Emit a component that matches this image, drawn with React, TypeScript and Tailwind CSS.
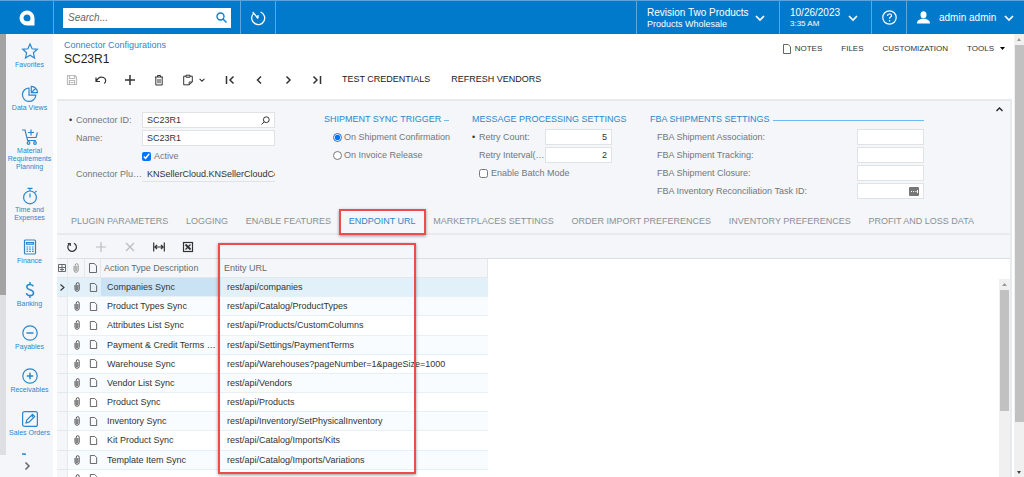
import type { ReactNode } from "react";

function Icon({ className = "size-3", box = 24, width = 2, children }: { className?: string; box?: number; width?: number; children: ReactNode }) {
  return (
    <svg
      viewBox={`0 0 ${box} ${box}`}
      className={`block shrink-0 ${className}`}
      fill="none"
      stroke="currentColor"
      strokeWidth={width}
      aria-hidden="true"
    >
      {children}
    </svg>
  );
}

const ChevronDown = ({ className = "size-[10px]" }: { className?: string }) => (
  <Icon className={className} box={10} width={1.7}>
    <path d="M1 3l4 4 4-4" />
  </Icon>
);

const PageIcon = ({ className = "size-[10px]" }: { className?: string }) => (
  <Icon className={className} box={10} width={1}>
    <path d="M1.5.5h4.8l2.2 2.4v6.6h-7z" />
  </Icon>
);

const ClipIcon = () => (
  <Icon className="size-[10px]" box={10} width={1}>
    <path d="M3 3v4.2a2.1 2.1 0 0 0 4.2 0V2.3a1.5 1.5 0 0 0-3-.2V7a.8.8 0 0 0 1.6 0V3" />
  </Icon>
);

const modules = [
  { label: "Favorites", icon: <path d="M9 2l2.1 4.8 5.2.5-3.9 3.5 1.1 5.1L9 13.2l-4.5 2.7 1.1-5.1-3.9-3.5 5.2-.5z" /> },
  {
    label: "Data Views",
    icon: (
      <>
        <path d="M8 3a6.7 6.7 0 1 0 6.8 7.2H8z" />
        <path d="M10.3 1.4v6.3h6.2a6.3 6.3 0 0 0-6.2-6.3zM10.3 7.7l4.2-4.2" />
      </>
    ),
  },
  {
    label: "Material Requirements Planning",
    icon: (
      <>
        <path d="M1 2h3l2.6 10.5h8.2M5.3 9.5h9.8l1.3-5M10 1.5v6M7 4.5h6" />
        <circle cx="7.5" cy="15" r="1.3" />
        <circle cx="14" cy="15" r="1.3" />
      </>
    ),
  },
  {
    label: "Time and Expenses",
    icon: (
      <>
        <circle cx="9" cy="10.4" r="6.4" />
        <path d="M9 4V1.4M6.5 1.4h5M14 5.4l1.6-1.6M9 10.5V6.4" />
      </>
    ),
  },
  {
    label: "Finance",
    icon: (
      <>
        <rect x="3.5" y="2" width="11" height="14" rx="1" />
        <path d="M5.5 4.5h7v1.6h-7zM5.5 9h1.6M8.2 9h1.6M11 9h1.6M5.5 11.2h1.6M8.2 11.2h1.6M11 11.2h1.6M5.5 13.4h1.6M8.2 13.4h1.6M11 13.4h1.6" />
      </>
    ),
  },
  {
    label: "Banking",
    icon: <path strokeWidth="1.5" d="M12.2 5.4C11.8 4 10.7 3.4 9 3.4 7 3.4 5.8 4.4 5.8 5.9c0 3.6 6.7 2.1 6.7 6 0 1.7-1.4 2.7-3.5 2.7-2 0-3.3-.9-3.6-2.5M9 1v2.4M9 14.6V17" />,
  },
  {
    label: "Payables",
    icon: (
      <>
        <circle cx="9" cy="9" r="7.2" />
        <path strokeWidth="1.5" d="M5.5 9h7" />
      </>
    ),
  },
  {
    label: "Receivables",
    icon: (
      <>
        <circle cx="9" cy="9" r="7.2" />
        <path strokeWidth="1.5" d="M5.8 9h6.4M9 5.8v6.4" />
      </>
    ),
  },
  {
    label: "Sales Orders",
    icon: (
      <>
        <rect x="1.6" y="1.6" width="14.8" height="14.8" rx="2" />
        <path d="M5 13l.8-3L11.5 4.3l2.2 2.2L8 12.2zM10.3 5.5l2.2 2.2" />
      </>
    ),
  },
];

const rows = [
  ["Companies Sync", "rest/api/companies"],
  ["Product Types Sync", "rest/api/Catalog/ProductTypes"],
  ["Attributes List Sync", "rest/api/Products/CustomColumns"],
  ["Payment & Credit Terms …", "rest/api/Settings/PaymentTerms"],
  ["Warehouse Sync", "rest/api/Warehouses?pageNumber=1&pageSize=1000"],
  ["Vendor List Sync", "rest/api/Vendors"],
  ["Product Sync", "rest/api/Products"],
  ["Inventory Sync", "rest/api/Inventory/SetPhysicalInventory"],
  ["Kit Product Sync", "rest/api/Catalog/Imports/Kits"],
  ["Template Item Sync", "rest/api/Catalog/Imports/Variations"],
  ["", ""],
];

const tabs = [
  "PLUGIN PARAMETERS",
  "LOGGING",
  "ENABLE FEATURES",
  "ENDPOINT URL",
  "MARKETPLACES SETTINGS",
  "ORDER IMPORT PREFERENCES",
  "INVENTORY PREFERENCES",
  "PROFIT AND LOSS DATA",
];

function TopBar() {
  return (
    <header className="flex h-[34px] shrink-0 items-stretch border-t border-[#5aa5dc] bg-[#027acc] text-[10px] text-white">
      <div className="flex w-[54px] items-center justify-center border-r border-[#5ba8df]">
        <svg viewBox="0 0 16 16" className="size-4" role="img" aria-label="Home">
          <path fill="#fff" fillRule="evenodd" d="M8 .5A7.5 7.5 0 0 0 8 15.500h7.500V8A7.500 7.500 0 0 0 8 .5zM8 4.500c2.200 0 3.500 1.500 3.500 3.700 0 2.300-1.500 3.100-3.500 3.100S4.500 10 4.500 8 6 4.500 8 4.500z" />
        </svg>
      </div>
      <div className="flex w-[187px] items-center border-r border-[#5ba8df] px-[9px]">
        <label className="flex h-5 w-full items-center bg-white pr-1 text-[#0a7fd0]">
          <input aria-label="Search" placeholder="Search..." className="min-w-0 flex-1 px-[5px] italic text-[#333] outline-none placeholder:text-[#666]" />
          <Icon className="size-[11px]" box={11} width={1.4}>
            <circle cx="4.5" cy="4.5" r="3.5" />
            <path d="M7 7l3.5 3.5" />
          </Icon>
        </label>
      </div>
      <button aria-label="Recently visited" className="flex w-[35px] items-center justify-center border-r border-[#5ba8df]">
        <Icon className="size-4" box={16} width={1.3}>
          <path d="M10.5 2a6.5 6.5 0 1 1-7.6 2.3M3.7 3.2L8 8.5M3 1.8l.6 2.7M8 8.3V5" />
        </Icon>
      </button>
      <div className="flex-1" />
      <button className="flex w-[143px] items-center gap-[7px] border-l border-[#5ba8df] pl-[10px] text-left">
        <span className="w-[101px] whitespace-nowrap leading-[12px]">
          Revision Two Products
          <span className="block text-[9px] leading-[10px]">Products Wholesale</span>
        </span>
        <ChevronDown />
      </button>
      <button className="flex w-[92px] items-center gap-[7px] border-l border-[#5ba8df] pl-[10px] text-left">
        <span className="w-[51px] whitespace-nowrap leading-[13px]">
          10/26/2023
          <span className="block text-[8px] leading-[10px]">3:35 AM</span>
        </span>
        <ChevronDown />
      </button>
      <button aria-label="Help" className="flex w-[35px] items-center justify-center border-l border-[#5ba8df]">
        <Icon className="size-[15px]" box={15} width={1.2}>
          <circle cx="7.5" cy="7.5" r="6.7" />
          <path d="M5.5 6c0-2.7 4-2.6 4-.3 0 1.4-2 1.4-2 3M7.5 10v1.4" />
        </Icon>
      </button>
      <button className="flex w-[118px] items-center border-l border-[#5ba8df] pl-[10px]">
        <svg viewBox="0 0 13 13" className="size-[13px]" fill="currentColor" aria-hidden="true">
          <ellipse cx="6.5" cy="3.7" rx="3" ry="3.5" />
          <path d="M0 12.5C0 9 2.5 8.8 4.8 7.8h3.4C10.5 8.8 13 9 13 12.5z" />
        </svg>
        <span className="ml-[9px] mr-2 whitespace-nowrap">admin admin</span>
        <ChevronDown />
      </button>
    </header>
  );
}

function Sidebar() {
  return (
    <nav className="flex w-[54px] shrink-0 flex-col border-r border-white bg-[#f4f6f9] text-[#2a87cf]">
      <div className="flex min-h-0 flex-1">
        <div className="flex w-[6px] shrink-0 flex-col bg-[#dddfe1]">
          <div className="h-[62%] bg-[#a3a3a3]" />
        </div>
        <ul className="flex min-w-0 flex-1 flex-col items-center gap-4 overflow-hidden pt-2">
          {modules.map((m) => (
            <li key={m.label} className="shrink-0">
              <a href="#" className="flex w-[42px] flex-col items-center gap-px text-center text-[7px] leading-[8px]">
                <Icon className="size-[18px]" box={18} width={1.2}>
                  {m.icon}
                </Icon>
                {m.label}
              </a>
            </li>
          ))}
          <li className="shrink-0">
            <a href="#" aria-label="Purchases">
              <Icon className="size-[18px]" box={18} width={1.5}>
                <path d="M1 1h3l2.6 11.5h8.2" />
              </Icon>
            </a>
          </li>
        </ul>
      </div>
      <button aria-label="Expand menu" className="flex h-[22px] shrink-0 items-center justify-center text-[#666]">
        <Icon className="size-2" box={8} width={1.5}>
          <path d="M2.5.5L6 4 2.5 7.5" />
        </Icon>
      </button>
    </nav>
  );
}

function ToolButton({ label, muted, children }: { label: string; muted?: boolean; children: ReactNode }) {
  return (
    <button aria-label={label} className={`flex h-5 w-[29px] items-center justify-center ${muted ? "text-[#bbb]" : "text-[#333]"}`}>
      <Icon className="size-3" box={12} width={1.2}>
        {children}
      </Icon>
    </button>
  );
}

function Heading({ children }: { children: string }) {
  return (
    <h2 className="mb-[3px] flex h-[14px] items-center gap-[3px] whitespace-nowrap text-[#2a87cf]">
      {children}
      <span className="mt-[2px] h-px flex-1 bg-[#6db9f0]" />
    </h2>
  );
}

const fieldBox = "h-4 min-w-0 border border-[#dfe3e6] bg-white px-1 text-[#333] outline-none";

function SummaryForm() {
  return (
    <form className="flex h-[108px] shrink-0 items-start pl-[10px] pt-[11px] leading-[16px] text-[#71767b]">
      <div className="flex w-[208px] flex-col gap-[2px]">
        <div className="flex">
          <label htmlFor="cid" className="w-[75px] whitespace-nowrap">
            <span className="inline-block w-[9px] pl-[2px] text-[#333]">•</span>Connector ID:
          </label>
          <div className={`${fieldBox} flex flex-1 items-center`}>
            <input id="cid" defaultValue="SC23R1" className="min-w-0 flex-1 outline-none" />
            <Icon className="size-[9px]" box={9} width={1}>
              <circle cx="5.3" cy="3.7" r="2.9" />
              <path d="M3.2 5.8L.5 8.5" />
            </Icon>
          </div>
        </div>
        <div className="flex">
          <label htmlFor="name" className="w-[75px] pl-[9px]">Name:</label>
          <input id="name" defaultValue="SC23R1" className={`${fieldBox} flex-1`} />
        </div>
        <label className="flex h-4 items-center gap-[3px] pl-[75px]">
          <input type="checkbox" defaultChecked className="size-[9px]" />
          Active
        </label>
        <div className="flex">
          <label htmlFor="plugin" className="w-[75px] whitespace-nowrap pl-[9px]">Connector Plu…</label>
          <input id="plugin" readOnly defaultValue="KNSellerCloud.KNSellerCloudConnector" className="h-4 min-w-0 flex-1 border-b border-[#dfe3e6] pl-[5px] text-[#333] outline-none" />
        </div>
      </div>

      <div className="ml-[49px] w-[125px]">
        <Heading>SHIPMENT SYNC TRIGGER</Heading>
        <div className="flex flex-col gap-[2px] whitespace-nowrap pl-[9px]">
          <label className="flex h-4 items-center gap-[2px]">
            <input type="radio" name="trigger" defaultChecked className="size-[9px]" />
            On Shipment Confirmation
          </label>
          <label className="flex h-4 items-center gap-[2px]">
            <input type="radio" name="trigger" className="size-[9px]" />
            On Invoice Release
          </label>
        </div>
      </div>

      <div className="ml-[23px] w-[140px]">
        <Heading>MESSAGE PROCESSING SETTINGS</Heading>
        <div className="flex flex-col gap-[2px]">
          <div className="flex">
            <label htmlFor="count" className="w-[73px]">
              <span className="inline-block w-[7px] text-[#333]">•</span>Retry Count:
            </label>
            <input id="count" defaultValue="5" className={`${fieldBox} flex-1 text-right`} />
          </div>
          <div className="flex">
            <label htmlFor="interval" className="w-[73px] whitespace-nowrap pl-[7px]">Retry Interval(…</label>
            <input id="interval" defaultValue="2" className={`${fieldBox} flex-1 text-right`} />
          </div>
          <label className="flex h-4 items-center gap-[3px] pl-[7px]">
            <input type="checkbox" className="size-[9px]" />
            Enable Batch Mode
          </label>
        </div>
      </div>

      <div className="ml-[38px] w-[274px]">
        <Heading>FBA SHIPMENTS SETTINGS</Heading>
        <div className="flex flex-col gap-[2px]">
          {["FBA Shipment Association:", "FBA Shipment Tracking:", "FBA Shipment Closure:", "FBA Inventory Reconciliation Task ID:"].map((text, i) => (
            <div key={text} className="flex pl-[7px]">
              <label htmlFor={`fba${i}`} className="flex-1">{text}</label>
              <div className={`${fieldBox} flex w-[67px] items-center`}>
                <input id={`fba${i}`} className="min-w-0 flex-1 outline-none" />
                {i === 3 && (
                  <svg viewBox="0 0 10 9" className="h-[9px] w-[10px] shrink-0" aria-hidden="true">
                    <rect width="10" height="9" rx="1" fill="#777" />
                    <path d="M2 4.5h1M4.2 4.5h1M6.4 4.5h1M8.5 3v3" stroke="#fff" />
                  </svg>
                )}
              </div>
            </div>
          ))}
        </div>
      </div>

      <button type="button" aria-label="Collapse" className="-mt-[6px] ml-auto mr-[7px] text-[#222]">
        <Icon className="size-[7px]" box={7} width={1.3}>
          <path d="M.5 5l3-3 3 3" />
        </Icon>
      </button>
    </form>
  );
}

function EndpointGrid() {
  const edge = "border-b border-r border-[#e3e8eb]";
  return (
    <section className="relative flex min-h-0 flex-1 flex-col">
      <div className="flex h-6 shrink-0 items-center border-b border-[#dcdfe2]">
        <ToolButton label="Refresh">
          <path d="M3.3 2.8a4.3 4.3 0 1 0 4.7-.6M1.8 2.5h2.5v2.5" />
        </ToolButton>
        <ToolButton label="Add row" muted>
          <path d="M6 1v10M1 6h10" />
        </ToolButton>
        <ToolButton label="Delete row" muted>
          <path d="M2 2l8 8M10 2l-8 8" />
        </ToolButton>
        <ToolButton label="Fit to screen">
          <path d="M.7 1.5v9M11.3 1.5v9M2 6h8M4 4L2 6l2 2M8 4l2 2-2 2" />
        </ToolButton>
        <ToolButton label="Export to Excel">
          <rect x="1.5" y="1.5" width="9" height="9" />
          <path d="M3.5 3.5l5 5" strokeWidth="2" />
          <path d="M8.5 3.5l-5 5" />
        </ToolButton>
      </div>
      <div className="flex min-h-0 flex-1 items-stretch overflow-hidden bg-white">
        <div className="min-w-0 flex-1">
          <table className="h-[230px] w-[431px] table-fixed border-separate border-spacing-0 text-left leading-[12px]">
            <colgroup>
              <col className="w-[11px]" />
              <col className="w-[17px]" />
              <col className="w-4" />
              <col className="w-[120px]" />
              <col />
            </colgroup>
            <thead className="bg-[#f4f6f9] text-[#666b70]">
              <tr className="h-[19px]">
                <th className={edge}>
                  <Icon className="ml-px size-2" box={8} width={1}>
                    <path d="M.5.5h7v7h-7zM.5 3.5h7M4 .5v7M2 5.5h4" />
                  </Icon>
                </th>
                <th className={`${edge} pl-[3px] text-[#999]`}><ClipIcon /></th>
                <th className={`${edge} pl-[3px]`}><PageIcon /></th>
                <th className={`${edge} pl-[3px] font-normal`}>Action Type Description</th>
                <th className={`${edge} pl-[3px] font-normal`}>Entity URL</th>
              </tr>
            </thead>
            <tbody className="text-[#333]">
              {rows.map(([name, url], i) => {
                const tone = i === 0 ? "bg-[#e2f0f9]" : i % 2 ? "bg-[#f8fcfe]" : "bg-white";
                return (
                  <tr key={i} className={`h-[19px] ${tone}`}>
                    <td className={`${edge} ${i === 0 ? "" : "bg-[#f4f6f9]"}`}>
                      {i === 0 && (
                        <Icon className="ml-[2px] size-[7px]" box={7} width={1.1}>
                          <path d="M1.5.5l3.5 3-3.5 3" />
                        </Icon>
                      )}
                    </td>
                    <td className="border-b border-[#e6f1f7] pl-[4px] text-[#555]"><ClipIcon /></td>
                    <td className="border-b border-[#e6f1f7] pl-1 text-[#555]"><PageIcon className="size-[9px]" /></td>
                    <td className={`whitespace-nowrap border-b border-[#e6f1f7] pl-[6px] ${i === 0 ? "bg-[#c9e3f4]" : ""}`}>{name}</td>
                    <td className="border-b border-[#e6f1f7] pl-[6px]">{url}</td>
                  </tr>
                );
              })}
            </tbody>
          </table>
        </div>
        <div className="mt-5 flex w-[11px] flex-col items-center bg-[#f0f0f0]">
          <svg viewBox="0 0 11 11" className="size-[11px] shrink-0" aria-hidden="true">
            <path d="M3 7l2.5-3L8 7z" fill="#999" />
          </svg>
          <div className="h-[61%] w-[9px] bg-[#c1c1c1]" />
        </div>
      </div>
      <div className="pointer-events-none absolute left-[161px] top-2 h-[231px] w-[198px] border-2 border-[#ee4c4c] shadow-[0_1px_3px_rgba(0,0,0,0.4)]" />
    </section>
  );
}

export default function App() {
  return (
    <div className="flex h-screen flex-col overflow-hidden bg-white font-['Liberation_Sans',Arial,sans-serif] text-[9px]">
      <TopBar />
      <div className="flex min-h-0 flex-1">
        <Sidebar />
        <main className="flex min-w-0 flex-1 flex-col pl-[3px] pr-[2px]">
          <div className="flex h-[36px] shrink-0 items-start justify-between pl-[7px] pt-[6px]">
            <div>
              <a href="#" className="block leading-[11px] text-[#2a87cf]">Connector Configurations</a>
              <h1 className="text-[12px] leading-[17px] text-[#222]">SC23R1</h1>
            </div>
            <div className="flex items-center gap-[19px] pr-[7px] pt-[3px] text-[8px] leading-[11px] text-[#333]">
              <button className="flex items-center gap-[3px]"><PageIcon className="size-[10px] text-[#5a6b5a]" />NOTES</button>
              <button>FILES</button>
              <button>CUSTOMIZATION</button>
              <button className="flex items-center gap-[6px]">
                TOOLS
                <svg viewBox="0 0 5 3" className="h-[3px] w-[5px]" aria-hidden="true"><path d="M0 0h5L2.5 3z" /></svg>
              </button>
            </div>
          </div>
          <div className="flex h-[29px] shrink-0 items-start text-[#222]">
            <ToolButton label="Save" muted>
              <path d="M1.5 1.5h7.5l1.5 1.5v7.5h-9zM3.5 1.5v3h5v-3M3.5 10.5v-4h5v4M4.5 8.5h3" />
            </ToolButton>
            <ToolButton label="Undo">
              <path d="M1 3.5v4h4M1.3 7.2C3 3.5 6 2.5 8.5 3.5c2.5 1 3 4.2.8 6" />
            </ToolButton>
            <ToolButton label="Add">
              <path strokeWidth="1.5" d="M6 1v10M1 6h10" />
            </ToolButton>
            <ToolButton label="Delete">
              <path strokeWidth="1" d="M2 3h8M4.5 3V1.5h3V3M2.8 3v8h6.4V3M5 5v4.3M7 5v4.3" />
            </ToolButton>
            <button aria-label="Copy and paste" className="flex h-5 w-[42px] items-center gap-[5px] pl-[9px] text-[#333]">
              <Icon className="size-3" box={12} width={1}>
                <path d="M4 2.2H1.7v8.6h5.5L10.3 8V2.2H8M4 1.2h4v2H4zM7.2 10.8V8h3.1" />
              </Icon>
              <ChevronDown className="size-[6px]" />
            </button>
            <ToolButton label="First record">
              <path strokeWidth="1.5" d="M2.5 2v8M9.5 2.5L6 6l3.5 3.5" />
            </ToolButton>
            <ToolButton label="Previous record">
              <path strokeWidth="1.5" d="M8 2.5L4.5 6 8 9.5" />
            </ToolButton>
            <ToolButton label="Next record">
              <path strokeWidth="1.5" d="M4.5 2.5L8 6 4.5 9.5" />
            </ToolButton>
            <ToolButton label="Last record">
              <path strokeWidth="1.5" d="M2.5 2.5L6 6 2.5 9.5M9.5 2v8" />
            </ToolButton>
            <button className="ml-[11px] h-5">TEST CREDENTIALS</button>
            <button className="ml-[21px] h-5">REFRESH VENDORS</button>
          </div>
          <div className="flex min-h-0 flex-1 flex-col border-r-2 border-t-2 border-[#e8ebed] bg-[#f4f6f9]">
            <SummaryForm />
            <div role="tablist" className="flex h-[26px] shrink-0 items-center justify-between whitespace-nowrap border-b-2 border-[#e8ebed] pl-[14px] pr-[36px] pt-[2px] text-[#8b9095]">
              {tabs.map((tab) =>
                tab === "ENDPOINT URL" ? (
                  <button key={tab} role="tab" aria-selected="true" className="relative text-[#2a87cf]">
                    {tab}
                    <span className="pointer-events-none absolute -inset-x-[10px] -inset-y-[6px] border-2 border-[#ee4c4c] shadow-[0_1px_3px_rgba(0,0,0,0.4)]" />
                  </button>
                ) : (
                  <button key={tab} role="tab" aria-selected="false">{tab}</button>
                ),
              )}
            </div>
            <EndpointGrid />
          </div>
        </main>
        <div className="flex w-[10px] shrink-0 flex-col items-center bg-[#f0f0f0]">
          <svg viewBox="0 0 10 11" className="h-[11px] w-[10px] shrink-0" aria-hidden="true"><path d="M3 7l2-3 2 3z" fill="#999" /></svg>
          <div className="h-[85%] w-[9px] bg-[#c1c1c1]" />
          <svg viewBox="0 0 10 11" className="mt-auto h-[11px] w-[10px] shrink-0" aria-hidden="true"><path d="M3 5l2 3 2-3z" fill="#444" /></svg>
        </div>
      </div>
    </div>
  );
}
